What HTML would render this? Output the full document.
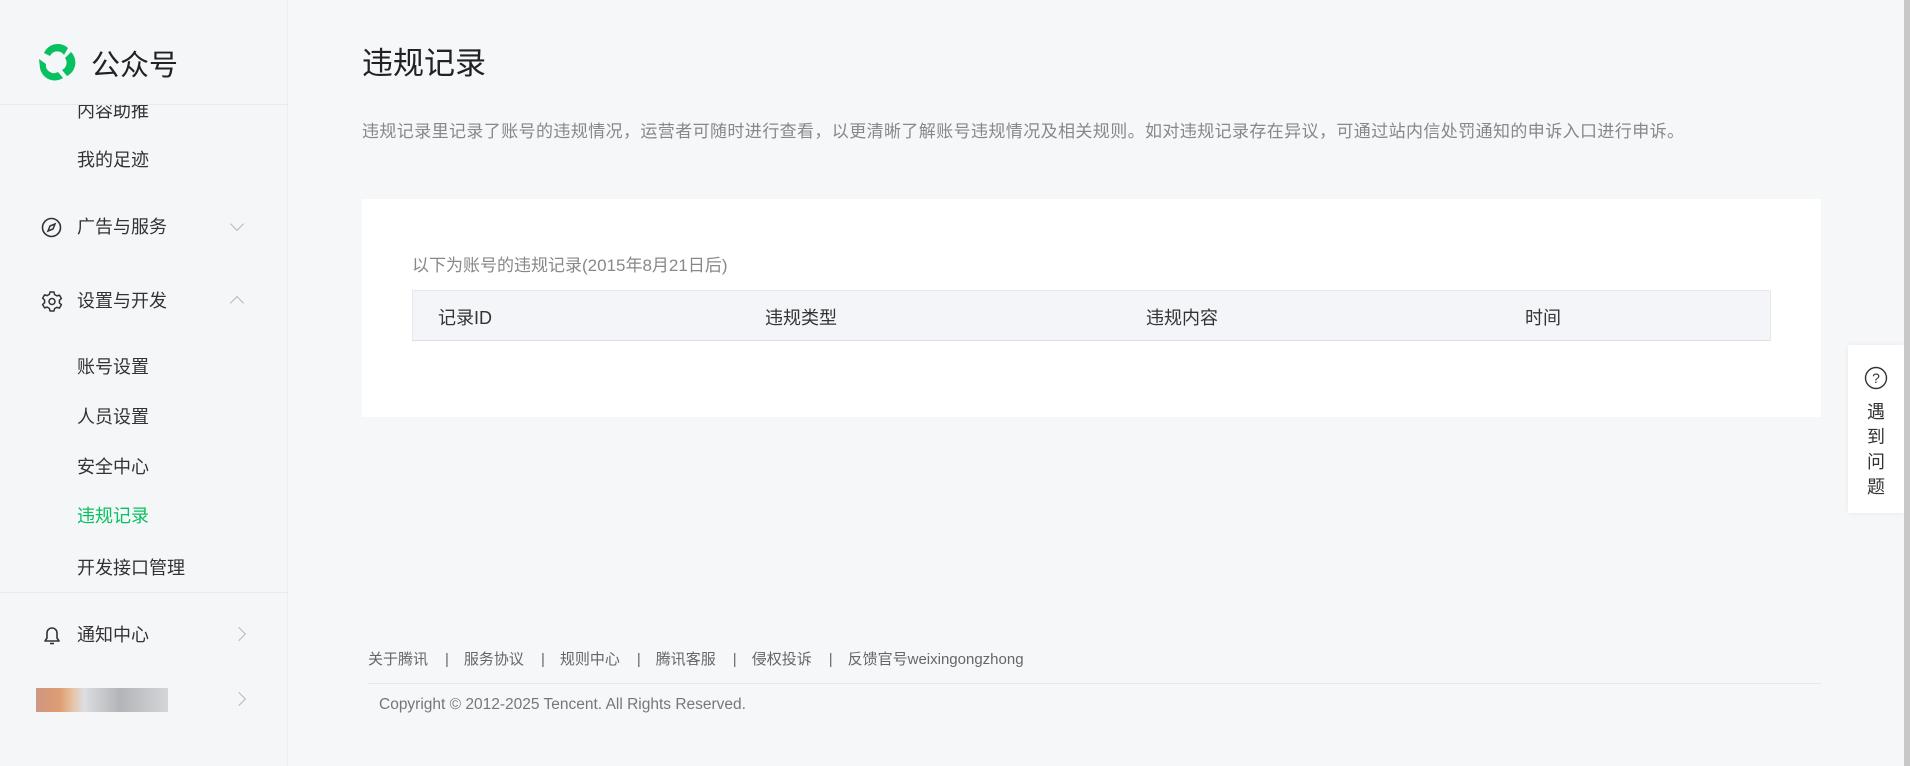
<!DOCTYPE html>
<html><head><meta charset="utf-8"><style>
*{margin:0;padding:0;box-sizing:border-box}
body{width:1910px;height:766px;overflow:hidden;background:#f6f7f9;font-family:"Liberation Sans","Noto Sans CJK SC",sans-serif;color:#333;position:relative}
.abs{position:absolute;white-space:nowrap}
.side{position:absolute;left:0;top:0;width:288px;height:766px;background:#f5f6f8;border-right:1px solid #eceef1}
.si{position:absolute;left:77px;font-size:18px;color:#333;line-height:24px}
.hr{position:absolute;left:0;width:288px;height:1px;background:#e8eaed}
.chev{position:absolute;left:232px;width:10px;height:10px;border-right:1.5px solid #b5b8bd;border-bottom:1.5px solid #b5b8bd}
.sep{margin:0 15px 0 17px}
</style></head><body>
<div class="side">
  <svg class="abs" style="left:34px;top:39px" width="44" height="44" viewBox="0 0 44 44">
    <g fill="#07c160">
      <path d="M10 14 A15 15 0 0 1 34 9 L30 16 A8 8 0 0 0 16 17 Z"/>
      <path d="M37 13 A15 15 0 0 1 33 37 L28 31 A8 8 0 0 0 31 19 Z"/>
      <path d="M29 39 A15 15 0 0 1 6 29 L5 20 L12 25 A8 8 0 0 0 24 33 Z"/>
    </g>
  </svg>
  <div class="abs" style="left:91px;top:42px;font-size:29px;color:#222">公众号</div>
  <div class="hr" style="top:104px"></div>
  <div style="position:absolute;left:0;top:105px;width:288px;height:487px;overflow:hidden">
    <div class="si" style="top:-6px">内容助推</div>
  </div>
  <div class="si" style="top:148px">我的足迹</div>
  <svg class="abs" style="left:41px;top:217px" width="21" height="21" viewBox="0 0 21 21"><circle cx="10.5" cy="10.5" r="9" fill="none" stroke="#333" stroke-width="1.6"/><path d="M14 7 L9 9 L7 14 L12 12 Z" fill="none" stroke="#333" stroke-width="1.5"/></svg>
  <div class="si" style="top:215px">广告与服务</div>
  <div class="chev" style="top:219px;transform:rotate(45deg)"></div>
  <svg class="abs" style="left:41px;top:290px" width="22" height="22" viewBox="0 0 22 22"><path d="M9 2h4l.6 2.6 2.3 1.3 2.5-.8 2 3.4-2 1.8v2.6l2 1.8-2 3.4-2.5-.8-2.3 1.3L13 21H9l-.6-2.6-2.3-1.3-2.5.8-2-3.4 2-1.8V10l-2-1.8 2-3.4 2.5.8 2.3-1.3z" fill="none" stroke="#333" stroke-width="1.5" stroke-linejoin="round"/><circle cx="11" cy="11.5" r="3" fill="none" stroke="#333" stroke-width="1.5"/></svg>
  <div class="si" style="top:289px">设置与开发</div>
  <div class="chev" style="top:298px;transform:rotate(-135deg)"></div>
  <div class="si" style="top:355px">账号设置</div>
  <div class="si" style="top:405px">人员设置</div>
  <div class="si" style="top:455px">安全中心</div>
  <div class="si" style="top:504px;color:#07c160">违规记录</div>
  <div class="si" style="top:556px">开发接口管理</div>
  <div class="hr" style="top:592px"></div>
  <svg class="abs" style="left:42px;top:624px" width="20" height="22" viewBox="0 0 20 22"><path d="M3 17 L5 14 V9 A5 5 0 0 1 15 9 V14 L17 17 Z" fill="none" stroke="#333" stroke-width="1.6" stroke-linejoin="round"/><path d="M8 19.5 h4" stroke="#333" stroke-width="1.6"/></svg>
  <div class="si" style="top:623px">通知中心</div>
  <div class="chev" style="top:629px;left:234px;transform:rotate(-45deg)"></div>
  <div class="abs" style="left:36px;top:688px;width:132px;height:24px;background:linear-gradient(90deg,#c8866e 0,#d98e5c 24px,#e4b892 36px,#d8d9dc 48px,#a8a9ae 84px,#cfd0d4 132px);opacity:.85"></div>
  <div class="chev" style="top:694px;left:234px;transform:rotate(-45deg)"></div>
</div>

<div class="abs" style="left:362px;top:38px;font-size:31px;color:#222">违规记录</div>
<div class="abs" style="left:362px;top:117px;font-size:17px;color:#888;letter-spacing:0.4px">违规记录里记录了账号的违规情况，运营者可随时进行查看，以更清晰了解账号违规情况及相关规则。如对违规记录存在异议，可通过站内信处罚通知的申诉入口进行申诉。</div>

<div class="abs" style="left:362px;top:199px;width:1459px;height:218px;background:#fff"></div>
<div class="abs" style="left:412px;top:251px;font-size:17px;color:#888">以下为账号的违规记录(2015年8月21日后)</div>
<div class="abs" style="left:412px;top:290px;width:1359px;height:51px;background:#f4f5f8;border:1px solid #e6e8ec;border-bottom-color:#dcdfe4"></div>
<div class="abs" style="left:438px;top:304px;font-size:18px;color:#333">记录ID</div>
<div class="abs" style="left:765px;top:304px;font-size:18px;color:#333">违规类型</div>
<div class="abs" style="left:1146px;top:304px;font-size:18px;color:#333">违规内容</div>
<div class="abs" style="left:1525px;top:304px;font-size:18px;color:#333">时间</div>

<div class="abs" style="left:368px;top:648px;font-size:15px;color:#666">关于腾讯<span class="sep">|</span>服务协议<span class="sep">|</span>规则中心<span class="sep">|</span>腾讯客服<span class="sep">|</span>侵权投诉<span class="sep">|</span>反馈官号weixingongzhong</div>
<div class="abs" style="left:368px;top:683px;width:1453px;height:1px;background:#e6e8eb"></div>
<div class="abs" style="left:379px;top:696px;font-size:15.5px;color:#777">Copyright © 2012-2025 Tencent. All Rights Reserved.</div>

<div class="abs" style="left:1848px;top:345px;width:56px;height:168px;background:#fff;box-shadow:0 0 6px rgba(0,0,0,.06)"></div>
<svg class="abs" style="left:1864px;top:366px" width="24" height="24" viewBox="0 0 24 24"><circle cx="12" cy="12" r="10.5" fill="none" stroke="#333" stroke-width="1.4"/><text x="12" y="17" text-anchor="middle" font-size="14" font-family="Liberation Sans" fill="#333">?</text></svg>
<div class="abs" style="left:1867px;top:400px;font-size:18px;line-height:25px;color:#333;white-space:normal;width:20px">遇到问题</div>
<div class="abs" style="left:1904px;top:0;width:6px;height:766px;background:#c8c8c8"></div>
</body></html>
